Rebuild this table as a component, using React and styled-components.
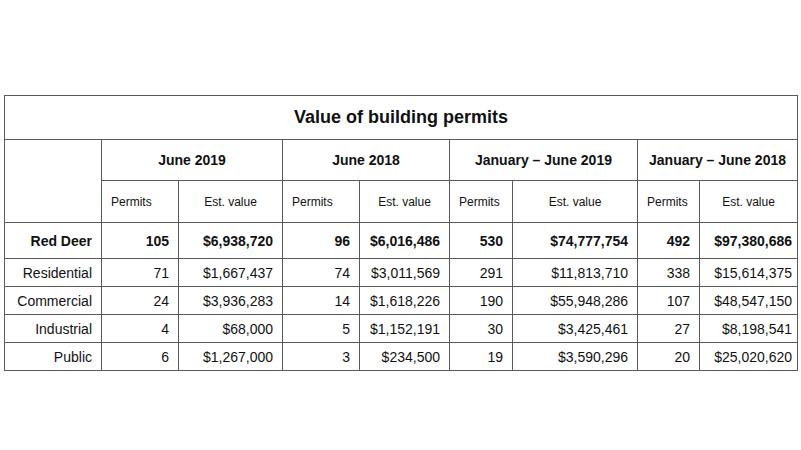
import React from "react";
import styled, { createGlobalStyle } from "styled-components";

const Global = createGlobalStyle`
  html, body { margin: 0; padding: 0; background: #ffffff; }
  body { font-family: "Liberation Sans", Arial, sans-serif; color: #000; }
`;

const Page = styled.div`
  width: 801px;
  height: 450px;
  box-sizing: border-box;
  padding: 95px 0 0 4px;
  background: #fff;
`;

const Table = styled.table`
  border-collapse: collapse;
  table-layout: fixed;
  width: 793px;
  font-family: "Liberation Sans", Arial, sans-serif;
  color: #111;
`;

const Cell = styled.td`
  border: 1px solid #5a5a5a;
  padding: 0 ${(p) => (p.$tight ? "5px" : "9px")} 0 9px;
  text-align: ${(p) => p.$align || "left"};
  font-size: ${(p) => p.$size || 14}px;
  font-weight: ${(p) => (p.$bold ? 700 : 400)};
  vertical-align: middle;
  white-space: nowrap;
  overflow: visible;
  box-sizing: border-box;
`;

const Row = styled.tr`
  height: ${(p) => p.$h}px;
`;

const cols = [97, 77, 104, 77, 90, 63, 125, 62, 98];

const groups = [
  "June 2019",
  "June 2018",
  "January – June 2019",
  "January – June 2018",
];

const summary = {
  name: "Red Deer",
  values: ["105", "$6,938,720", "96", "$6,016,486", "530", "$74,777,754", "492", "$97,380,686"],
};

const rows = [
  { name: "Residential", values: ["71", "$1,667,437", "74", "$3,011,569", "291", "$11,813,710", "338", "$15,614,375"] },
  { name: "Commercial", values: ["24", "$3,936,283", "14", "$1,618,226", "190", "$55,948,286", "107", "$48,547,150"] },
  { name: "Industrial", values: ["4", "$68,000", "5", "$1,152,191", "30", "$3,425,461", "27", "$8,198,541"] },
  { name: "Public", values: ["6", "$1,267,000", "3", "$234,500", "19", "$3,590,296", "20", "$25,020,620"] },
];

export default function App() {
  return (
    <Page>
      <Global />
      <Table>
        <colgroup>
          {cols.map((w, i) => (
            <col key={i} style={{ width: w }} />
          ))}
        </colgroup>
        <thead>
          <Row $h={44}>
            <Cell as="th" colSpan={9} $align="center" $size={18} $bold>
              Value of building permits
            </Cell>
          </Row>
          <Row $h={41}>
            <Cell as="td" rowSpan={2} />
            {groups.map((g) => (
              <Cell as="th" key={g} colSpan={2} $align="center" $bold>
                {g}
              </Cell>
            ))}
          </Row>
          <Row $h={42}>
            {groups.map((g) => (
              <React.Fragment key={g}>
                <Cell as="th" $align="left" $size={12}>Permits</Cell>
                <Cell as="th" $align="center" $size={12}>Est. value</Cell>
              </React.Fragment>
            ))}
          </Row>
        </thead>
        <tbody>
          <Row $h={36}>
            <Cell $align="right" $bold>{summary.name}</Cell>
            {summary.values.map((v, i) => (
              <Cell key={i} $align="right" $bold $tight={i === 7}>{v}</Cell>
            ))}
          </Row>
          {rows.map((r) => (
            <Row $h={28} key={r.name}>
              <Cell $align="right">{r.name}</Cell>
              {r.values.map((v, i) => (
                <Cell key={i} $align="right" $tight={i === 7}>{v}</Cell>
              ))}
            </Row>
          ))}
        </tbody>
      </Table>
    </Page>
  );
}
